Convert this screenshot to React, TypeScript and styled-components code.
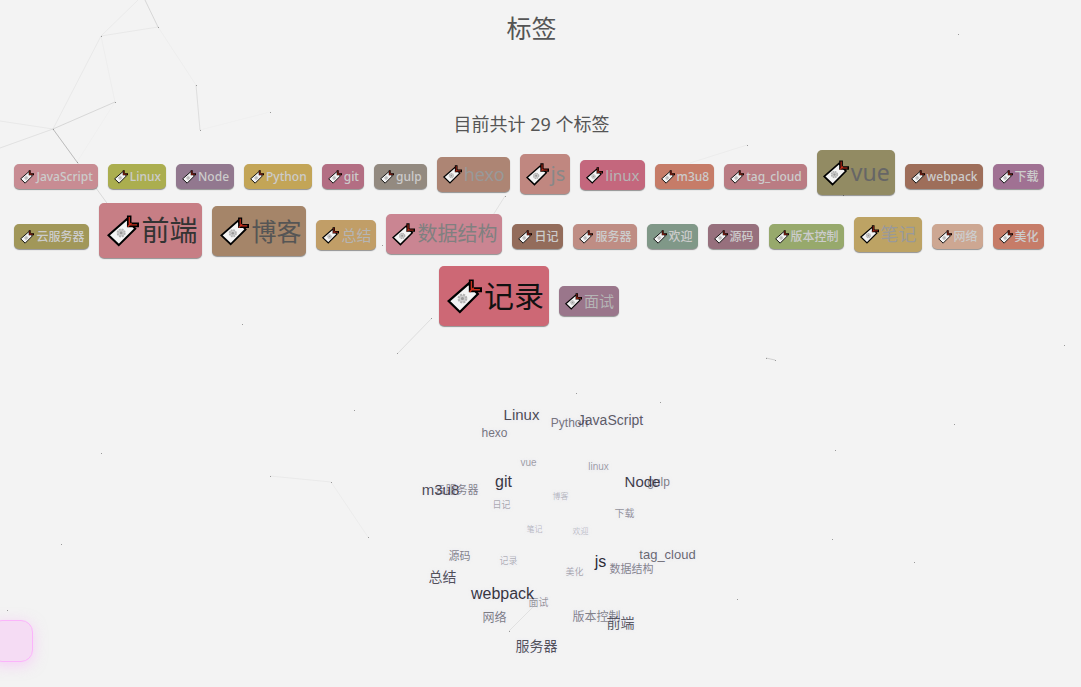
import React from "react";
import styled, { createGlobalStyle } from "styled-components";

const GlobalStyle = createGlobalStyle`
  html, body { margin: 0; background: #f3f3f3; }
  body {
    color: #555;
    font-family: "Noto Sans", "Noto Sans CJK SC", sans-serif;
    overflow: hidden;
  }
`;

const Page = styled.main`
  position: relative;
  min-height: 100vh;
  box-sizing: border-box;
  padding: 8px 18px 0 0;
  overflow: hidden;
`;

const Network = styled.svg`
  position: absolute;
  top: 0;
  left: 0;
  pointer-events: none;
`;

const Content = styled.div`
  position: relative;
`;

const Title = styled.h1`
  margin: 0;
  font-size: 25px;
  font-weight: 400;
  line-height: 40px;
  text-align: center;
`;

const Count = styled.p`
  margin: 61px 0 11px;
  font-size: 18px;
  line-height: 30px;
  text-align: center;
  font-family: "Noto Sans", "Noto Sans CJK SC", sans-serif;
`;

const TagList = styled.nav`
  display: flex;
  flex-wrap: wrap;
  justify-content: center;
  align-items: baseline;
  gap: 8px 10px;
  padding: 0 9px 0 4px;
`;

const TagLink = styled.a<{ $bg: string; $fg: string; $size: number; $height: number }>`
  display: inline-flex;
  align-items: baseline;
  padding: 0 5px 0 ${(p) => (p.$size >= 25 ? 8 : 6)}px;
  border-radius: 5px;
  background: ${(p) => p.$bg};
  color: ${(p) => p.$fg};
  font-size: ${(p) => p.$size}px;
  font-weight: ${(p) => (p.$size === 12 ? 500 : 400)};
  line-height: ${(p) => p.$height}px;
  box-shadow: 0 1px 1px rgba(0, 0, 0, 0.4);
  text-decoration: none;
  white-space: nowrap;
`;

const TagIcon = styled.svg<{ $size: number }>`
  flex: none;
  align-self: center;
  width: ${(p) => p.$size}px;
  height: ${(p) => p.$size}px;
  margin-right: 2px;
`;

const Cloud = styled.div`
  position: relative;
  width: 300px;
  height: 280px;
  margin: 54px auto 0;
  font-family: "Liberation Sans", "Noto Sans CJK SC", sans-serif;
`;

const CloudLink = styled.a<{ $x: number; $y: number; $size: number; $alpha: number }>`
  position: absolute;
  left: ${(p) => p.$x}px;
  top: ${(p) => p.$y}px;
  transform: translate(-50%, -50%);
  color: rgba(38, 36, 46, ${(p) => p.$alpha});
  font-size: ${(p) => p.$size}px;
  line-height: 20px;
  text-decoration: none;
  white-space: nowrap;
  text-shadow: 0 0 3px rgba(220, 220, 250, 0.5);
`;

const SideButton = styled.button`
  position: fixed;
  left: -10px;
  bottom: 25px;
  width: 43px;
  height: 42px;
  padding: 0;
  border: 1px solid #fbb4fb;
  border-radius: 12px;
  background: #f5dcf4;
  box-shadow: 0 3px 14px rgba(250, 170, 250, 0.5);
`;

type Tag = [name: string, size: number, bg: string, fg: string];

const tags: Tag[] = [
  ["JavaScript", 12, "#c88c93", "#ccc"],
  ["Linux", 12, "#abae4f", "#ccc"],
  ["Node", 12, "#92788f", "#ccc"],
  ["Python", 12, "#c3a557", "#ccc"],
  ["git", 12, "#b36e83", "#ccc"],
  ["gulp", 12, "#938a80", "#ccc"],
  ["hexo", 18, "#ad8574", "#999"],
  ["js", 20, "#c08780", "#888"],
  ["linux", 15, "#c4677d", "#b5b5b5"],
  ["m3u8", 12, "#c67c68", "#ccc"],
  ["tag_cloud", 12, "#ba7c83", "#ccc"],
  ["vue", 23, "#928b63", "#666"],
  ["webpack", 12, "#9e6e5a", "#ccc"],
  ["下载", 12, "#a07193", "#ccc"],
  ["云服务器", 12, "#a19759", "#ccc"],
  ["前端", 28, "#c77e85", "#333"],
  ["博客", 25, "#a58569", "#555"],
  ["总结", 15, "#c19e67", "#b5b5b5"],
  ["数据结构", 20, "#ca8592", "#808080"],
  ["日记", 12, "#936c5b", "#ccc"],
  ["服务器", 12, "#bf8d84", "#ccc"],
  ["欢迎", 12, "#809888", "#ccc"],
  ["源码", 12, "#97707d", "#ccc"],
  ["版本控制", 12, "#97a96c", "#ccc"],
  ["笔记", 18, "#bda364", "#999"],
  ["网络", 12, "#cda792", "#ccc"],
  ["美化", 12, "#c67c68", "#ccc"],
  ["记录", 30, "#cd6875", "#111"],
  ["面试", 15, "#9a768b", "#b5b5b5"],
];

/* font size -> pill height and icon width */
const scale: Record<number, { height: number; icon: number }> = {
  12: { height: 25, icon: 14 },
  15: { height: 30, icon: 17 },
  18: { height: 35, icon: 19 },
  20: { height: 40, icon: 23 },
  23: { height: 45, icon: 26 },
  25: { height: 50, icon: 29 },
  28: { height: 55, icon: 32 },
  30: { height: 60, icon: 35 },
};

type CloudTag = [name: string, x: number, y: number, size: number, alpha: number];

const cloudTags: CloudTag[] = [
  ["欢迎", 199, 152, 8, 0.25],
  ["笔记", 153, 150, 8, 0.28],
  ["博客", 179, 117, 8, 0.28],
  ["美化", 193, 192, 9, 0.37],
  ["记录", 127, 181, 9, 0.33],
  ["日记", 120, 125, 9, 0.37],
  ["vue", 147, 83, 10, 0.42],
  ["linux", 217, 87, 10, 0.42],
  ["面试", 157, 223, 10, 0.45],
  ["下载", 243, 134, 10, 0.48],
  ["数据结构", 250, 189, 11, 0.55],
  ["源码", 78, 176, 11, 0.55],
  ["云服务器", 75, 110, 11, 0.55],
  ["版本控制", 215, 237, 12, 0.55],
  ["gulp", 277, 102, 12, 0.58],
  ["网络", 113, 238, 12, 0.58],
  ["hexo", 113, 53, 12, 0.62],
  ["Python", 188, 43, 12, 0.62],
  ["tag_cloud", 286, 175, 13, 0.68],
  ["JavaScript", 229, 40, 14, 0.74],
  ["前端", 239, 243, 14, 0.74],
  ["总结", 61, 197, 14, 0.78],
  ["服务器", 155, 266, 14, 0.78],
  ["m3u8", 59, 110, 15, 0.82],
  ["Linux", 140, 35, 15, 0.82],
  ["Node", 261, 102, 15, 0.88],
  ["git", 122, 102, 16, 0.92],
  ["webpack", 121, 214, 16, 0.92],
  ["js", 219, 182, 16, 0.98],
];

const links: [number, number, number, number, number][] = [
  [145, 0, 158, 27, 0.16],
  [138, 0, 101, 36, 0.05],
  [101, 36, 158, 27, 0.06],
  [101, 36, 53, 129, 0.06],
  [101, 36, 115, 102, 0.03],
  [53, 129, 115, 102, 0.16],
  [53, 129, 77, 162, 0.2],
  [53, 129, 112, 210, 0.15],
  [0, 121, 53, 129, 0.06],
  [0, 148, 53, 129, 0.1],
  [115, 102, 77, 162, 0.02],
  [158, 27, 196, 85, 0.03],
  [196, 85, 200, 130, 0.12],
  [200, 130, 270, 112, 0.02],
  [505, 196, 480, 236, 0.1],
  [432, 318, 398, 353, 0.12],
  [270, 476, 331, 482, 0.05],
  [331, 482, 368, 537, 0.04],
  [509, 631, 536, 604, 0.1],
  [747, 145, 690, 163, 0.04],
  [766, 358, 775, 360, 0.2],
];

const dots: [number, number][] = [
  [158, 27], [101, 36], [53, 129], [115, 102], [77, 162], [196, 85], [200, 130],
  [270, 112], [505, 196], [382, 245], [431, 318], [397, 353], [242, 324], [354, 410],
  [270, 476], [331, 482], [368, 537], [101, 453], [61, 544], [7, 610], [509, 631],
  [576, 393], [660, 402], [747, 145], [843, 195], [766, 358], [775, 360], [958, 34],
  [1064, 345], [954, 424], [835, 450], [832, 539], [914, 562], [737, 599],
];

function BookmarkIcon({ size }: { size: number }) {
  return (
    <TagIcon $size={size} viewBox="0 0 34 34" aria-hidden="true">
      <path d="M1.6 21.500 21 4.500 30 14.500 12.500 32Z" fill="#f4f4f4" stroke="#000" strokeWidth="2.200" />
      <circle cx="15" cy="19" r="3.800" fill="#ccc" stroke="#b4b4b4" strokeWidth="2" strokeDasharray="2 1" />
      <circle cx="15" cy="19" r="1.500" fill="#999" />
      <path d="M23.600 0.500V10.500H34" fill="none" stroke="#000" strokeWidth="4.800" />
      <path d="M23.700 2V10.500H32M22 12.500 26 8.500" fill="none" stroke="#c92f1c" strokeWidth="1.400" />
    </TagIcon>
  );
}

export default function App() {
  return (
    <Page>
      <GlobalStyle />
      <Network width="1081" height="687" aria-hidden="true">
        <g opacity="0.7">
          {links.map(([x1, y1, x2, y2, alpha], i) => (
            <line key={i} x1={x1} y1={y1} x2={x2} y2={y2} stroke="#000" strokeOpacity={alpha} />
          ))}
        </g>
        {dots.map(([x, y], i) => (
          <rect key={i} x={x} y={y} width="1" height="1" fill="#999" />
        ))}
      </Network>
      <Content>
        <Title>标签</Title>
        <Count>目前共计 29 个标签</Count>
        <TagList>
          {tags.map(([name, size, bg, fg]) => (
            <TagLink key={name} href="#" $bg={bg} $fg={fg} $size={size} $height={scale[size].height}>
              <BookmarkIcon size={scale[size].icon} />
              {name}
            </TagLink>
          ))}
        </TagList>
        <Cloud>
          {cloudTags.map(([name, x, y, size, alpha]) => (
            <CloudLink key={name} href="#" $x={x} $y={y} $size={size} $alpha={alpha}>
              {name}
            </CloudLink>
          ))}
        </Cloud>
      </Content>
      <SideButton type="button" aria-label="Menu" />
    </Page>
  );
}
